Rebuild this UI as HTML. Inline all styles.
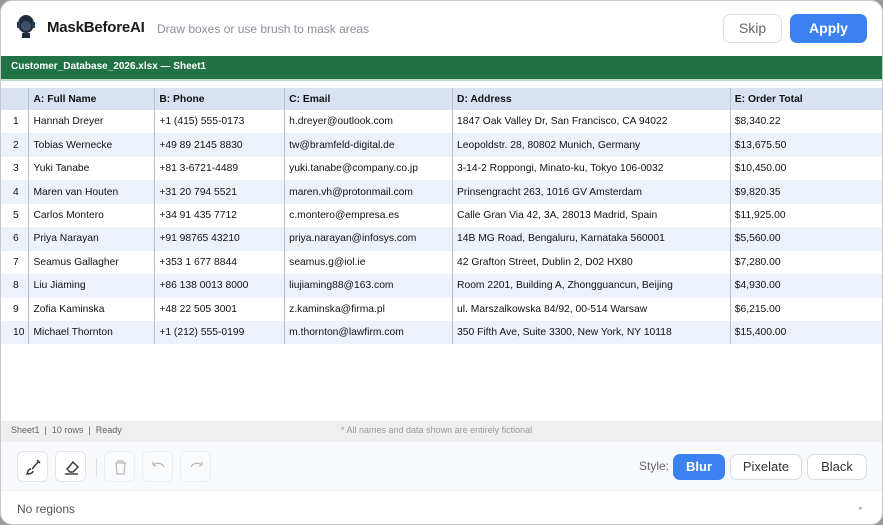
<!DOCTYPE html>
<html><head><style>
*{box-sizing:border-box;margin:0;padding:0}
body{width:883px;height:525px;background:#9a9a9a;font-family:"Liberation Sans",sans-serif;overflow:hidden;position:relative}
.win{position:absolute;left:0;top:0;width:883px;height:525px;background:#fff;border-radius:12px;overflow:hidden;border:1px solid #c8c8c8}
.hdr{position:absolute;left:0;top:0;width:100%;height:55px}
.title{position:absolute;left:46px;top:18px;font-size:15px;font-weight:bold;color:#1a1a1a;letter-spacing:-0.2px}
.sub{position:absolute;left:156px;top:21px;font-size:12px;color:#8a8f98}
.btn{position:absolute;border-radius:7px;font-size:14px;text-align:center}
.green{position:absolute;left:0;top:55px;width:100%;height:23px;background:#217346;color:#fff;font-size:10px;font-weight:bold;padding:5px 10px}
.gl{position:absolute;left:0;top:78px;width:100%;height:2px;background:#b9dec8}
table{position:absolute;left:0;top:87px;border-collapse:collapse;font-size:10.3px;color:#111}
td{height:23.45px;padding:0 4px;border-right:1px solid #b7bfcc;white-space:nowrap}
tr.h td{background:#d9e1f2;font-weight:bold;height:22px}
tr:nth-child(odd):not(.h) td{background:#edf1fa}
td:first-child{padding-left:12px;padding-right:0}
td:last-child{border-right:none}
.status{position:absolute;left:0;top:420px;width:100%;height:21px;background:#efefef;font-size:9px;color:#666;padding:4px 10px}
.tool{position:absolute;left:0;top:441px;width:100%;height:49px;background:#f7f9fc;border-bottom:1px solid #eceef2}
.ib{position:absolute;top:9px;width:31px;height:31px;border:1px solid #e2e5ea;border-radius:6px;background:#fff}
.foot{position:absolute;left:16px;top:501px;font-size:12px;color:#555}
</style></head><body><div class="win">
<div class="hdr">
<svg style="position:absolute;left:15px;top:13px" width="20" height="26" viewBox="0 0 20 26"><ellipse cx="10" cy="10" rx="8" ry="9" fill="#1f2a3a"/><ellipse cx="10" cy="12" rx="5" ry="5" fill="#3c5068"/><rect x="6" y="19" width="8" height="5" fill="#1f2a3a"/><rect x="1" y="8" width="3" height="6" fill="#2b3b50"/><rect x="16" y="8" width="3" height="6" fill="#2b3b50"/></svg>
<div class="title">MaskBeforeAI</div>
<div class="sub">Draw boxes or use brush to mask areas</div>
<div class="btn" style="left:722px;top:13px;width:59px;height:29px;border:1px solid #dcdfe4;color:#666;line-height:27px">Skip</div>
<div class="btn" style="left:789px;top:13px;width:77px;height:29px;background:#3b82f0;color:#fff;font-weight:bold;line-height:29px">Apply</div>
</div>
<div class="green">Customer_Database_2026.xlsx — Sheet1</div>
<div class="gl"></div>
<table>
<colgroup><col style="width:28px"><col style="width:126px"><col style="width:130px"><col style="width:168px"><col style="width:278px"><col style="width:152px"></colgroup>
<tr class="h"><td></td><td>A: Full Name</td><td>B: Phone</td><td>C: Email</td><td>D: Address</td><td>E: Order Total</td></tr>
<tr><td>1</td><td>Hannah Dreyer</td><td>+1 (415) 555-0173</td><td>h.dreyer@outlook.com</td><td>1847 Oak Valley Dr, San Francisco, CA 94022</td><td>$8,340.22</td></tr>
<tr><td>2</td><td>Tobias Wernecke</td><td>+49 89 2145 8830</td><td>tw@bramfeld-digital.de</td><td>Leopoldstr. 28, 80802 Munich, Germany</td><td>$13,675.50</td></tr>
<tr><td>3</td><td>Yuki Tanabe</td><td>+81 3-6721-4489</td><td>yuki.tanabe@company.co.jp</td><td>3-14-2 Roppongi, Minato-ku, Tokyo 106-0032</td><td>$10,450.00</td></tr>
<tr><td>4</td><td>Maren van Houten</td><td>+31 20 794 5521</td><td>maren.vh@protonmail.com</td><td>Prinsengracht 263, 1016 GV Amsterdam</td><td>$9,820.35</td></tr>
<tr><td>5</td><td>Carlos Montero</td><td>+34 91 435 7712</td><td>c.montero@empresa.es</td><td>Calle Gran Via 42, 3A, 28013 Madrid, Spain</td><td>$11,925.00</td></tr>
<tr><td>6</td><td>Priya Narayan</td><td>+91 98765 43210</td><td>priya.narayan@infosys.com</td><td>14B MG Road, Bengaluru, Karnataka 560001</td><td>$5,560.00</td></tr>
<tr><td>7</td><td>Seamus Gallagher</td><td>+353 1 677 8844</td><td>seamus.g@iol.ie</td><td>42 Grafton Street, Dublin 2, D02 HX80</td><td>$7,280.00</td></tr>
<tr><td>8</td><td>Liu Jiaming</td><td>+86 138 0013 8000</td><td>liujiaming88@163.com</td><td>Room 2201, Building A, Zhongguancun, Beijing</td><td>$4,930.00</td></tr>
<tr><td>9</td><td>Zofia Kaminska</td><td>+48 22 505 3001</td><td>z.kaminska@firma.pl</td><td>ul. Marszalkowska 84/92, 00-514 Warsaw</td><td>$6,215.00</td></tr>
<tr><td>10</td><td>Michael Thornton</td><td>+1 (212) 555-0199</td><td>m.thornton@lawfirm.com</td><td>350 Fifth Ave, Suite 3300, New York, NY 10118</td><td>$15,400.00</td></tr>
</table>
<div class="status">Sheet1 &nbsp;| &nbsp;10 rows &nbsp;| &nbsp;Ready<span style="position:absolute;left:340px;color:#999">* All names and data shown are entirely fictional</span></div>
<div class="tool">
<div class="ib" style="left:16px"><svg width="31" height="31" viewBox="0 0 31 31" fill="none" stroke="#333" stroke-width="1.4"><path d="M21 9 L14 17"/><path d="M19 8 L22 11"/><path d="M13 17 C10 17 10 20 9 22 C12 22 15 21 15 19"/></svg></div>
<div class="ib" style="left:54px"><svg width="31" height="31" viewBox="0 0 31 31" fill="none" stroke="#333" stroke-width="1.4"><path d="M11 17 L17 10 L22 15 L17 20 L14 20 Z"/><path d="M9 22 H22"/></svg></div>
<div style="position:absolute;left:95px;top:16px;width:1px;height:18px;background:#dde0e5"></div>
<div class="ib" style="left:103px;border-color:#eceef1;background:#f9fafc"><svg width="31" height="31" viewBox="0 0 31 31" fill="none" stroke="#bbb" stroke-width="1.3"><path d="M10 11 H21 M13 11 V9 H18 V11 M11 11 L12 22 H19 L20 11"/></svg></div>
<div class="ib" style="left:141px;border-color:#eceef1;background:#f9fafc"><svg width="31" height="31" viewBox="0 0 31 31" fill="none" stroke="#bbb" stroke-width="1.3"><path d="M10 13 C14 10 19 11 21 15 M10 13 L10 10 M10 13 L13 14"/></svg></div>
<div class="ib" style="left:179px;border-color:#eceef1;background:#f9fafc"><svg width="31" height="31" viewBox="0 0 31 31" fill="none" stroke="#bbb" stroke-width="1.3"><path d="M21 13 C17 10 12 11 10 15 M21 13 L21 10 M21 13 L18 14"/></svg></div>
<div style="position:absolute;left:638px;top:17px;font-size:12px;color:#666">Style:</div>
<div class="btn" style="left:672px;top:12px;width:52px;height:26px;background:#3b82f0;color:#fff;font-weight:bold;font-size:13px;line-height:26px">Blur</div>
<div class="btn" style="left:729px;top:12px;width:72px;height:26px;border:1px solid #d8dde4;background:#fff;color:#333;font-size:13px;line-height:24px">Pixelate</div>
<div class="btn" style="left:806px;top:12px;width:60px;height:26px;border:1px solid #d8dde4;background:#fff;color:#333;font-size:13px;line-height:24px">Black</div>
</div>
<div class="foot">No regions</div>
<div style="position:absolute;left:858px;top:503px;font-size:7px;color:#aaa">▸</div>
</div></body></html>
